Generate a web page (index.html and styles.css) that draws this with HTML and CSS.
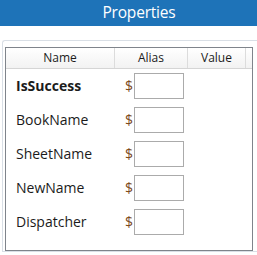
FILE: index.html
```html
<!DOCTYPE html>
<html>
<head>
<meta charset="utf-8">
<link rel="stylesheet" href="styles.css">
</head>
<body>
<div class="title">Properties</div>
<div class="group">
  <div class="panel">
    <div class="head">
      <div class="hc c-name">Name</div>
      <div class="hc c-alias">Alias</div>
      <div class="hc c-value">Value</div>
      <div class="hc c-rest"></div>
    </div>
    <div class="row">
      <div class="name bold">IsSuccess</div>
      <div class="alias"><span class="dollar">$</span><span class="box"></span></div>
    </div>
    <div class="row">
      <div class="name">BookName</div>
      <div class="alias"><span class="dollar">$</span><span class="box"></span></div>
    </div>
    <div class="row">
      <div class="name">SheetName</div>
      <div class="alias"><span class="dollar">$</span><span class="box"></span></div>
    </div>
    <div class="row">
      <div class="name">NewName</div>
      <div class="alias"><span class="dollar">$</span><span class="box"></span></div>
    </div>
    <div class="row">
      <div class="name">Dispatcher</div>
      <div class="alias"><span class="dollar">$</span><span class="box"></span></div>
    </div>
  </div>
</div>
</body>
</html>
```
FILE: styles.css
```css
html, body {
  margin: 0;
  padding: 0;
  background: #ffffff;
  width: 257px;
  height: 255px;
  overflow: hidden;
  font-family: "Open Sans", "Noto Sans", sans-serif;
  color: #1b1b1b;
}
.title {
  height: 26px;
  background: #1e73b8;
  color: #ffffff;
  font-size: 15.5px;
  line-height: 24px;
  text-align: center;
  padding-left: 21px;
  letter-spacing: -0.2px;
}
.group {
  margin-top: 14px;
  margin-left: 2px;
  width: 255px;
  height: 212px;
  border: 1px solid #d9dfe6;
  border-right: none;
  border-radius: 3px 0 0 0;
  padding: 6px 0 0 2px;
  box-sizing: border-box;
}
.panel {
  width: 248px;
  height: 204px;
  border: 1px solid #7f848b;
  box-sizing: border-box;
}
.head {
  display: flex;
  height: 21px;
  border-bottom: 1px solid #d5d5d5;
  background: linear-gradient(#ffffff, #f2f2f2);
  box-sizing: border-box;
}
.hc {
  font-size: 12px;
  line-height: 19px;
  text-align: center;
  border-right: 1px solid #dcdcdc;
  box-sizing: border-box;
}
.c-name { width: 109px; }
.c-alias { width: 73px; }
.c-value { width: 58px; }
.c-rest { flex: 1; border-right: none; }
.row {
  display: flex;
  height: 34px;
  align-items: flex-start;
}
.name {
  width: 109px;
  padding-left: 10px;
  box-sizing: border-box;
  font-size: 14px;
  line-height: 34px;
}
.bold { font-weight: bold; }
.alias {
  display: flex;
  align-items: flex-start;
  padding-left: 10px;
  padding-top: 4px;
}
.dollar {
  color: #7c4a1c;
  font-size: 14px;
  line-height: 26px;
  width: 9px;
}
.box {
  display: block;
  width: 50px;
  height: 26px;
  border: 1px solid #ababab;
  box-sizing: border-box;
  background: #fff;
}
```
